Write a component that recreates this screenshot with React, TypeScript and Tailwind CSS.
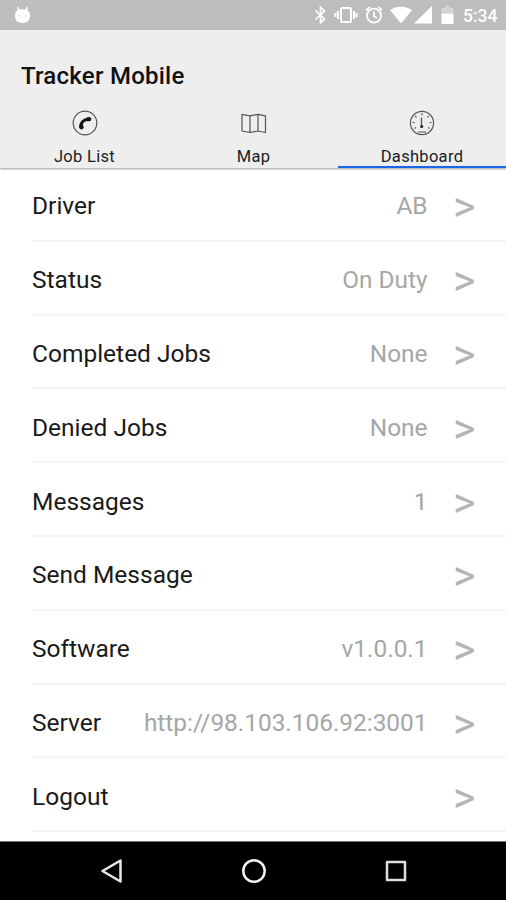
import type { ReactNode } from "react";

type Row = { label: string; value?: string };

const rows: Row[] = [
  { label: "Driver", value: "AB" },
  { label: "Status", value: "On Duty" },
  { label: "Completed Jobs", value: "None" },
  { label: "Denied Jobs", value: "None" },
  { label: "Messages", value: "1" },
  { label: "Send Message" },
  { label: "Software", value: "v1.0.0.1" },
  { label: "Server", value: "http://98.103.106.92:3001" },
  { label: "Logout" },
];

function StatusBar() {
  return (
    <div className="flex h-[30px] shrink-0 items-center bg-[#bdbdbd] pr-[9px] pl-[14px] text-white">
      <svg width="17" height="18" viewBox="0 0 17 18" fill="currentColor">
        <path d="M4 0.5 5.8 3.500h5.400L13 0.500l0.800 0.500-0.500 3.200c1.800 1 2.700 2.800 2.700 5.400 0 5-2.300 7.400-7.500 7.400S1 14.600 1 9.600c0-2.600.9-4.400 2.700-5.400L3.200 1z" />
        <circle cx="5.2" cy="9.7" r="0.7" fill="#bdbdbd" />
        <circle cx="11.8" cy="9.7" r="0.7" fill="#bdbdbd" />
      </svg>
      <div className="ml-auto flex items-center">
        <svg width="13" height="18" viewBox="0 0 13 18" fill="none" stroke="currentColor" strokeWidth="1.7">
          <path d="m1.500 4.500 9 8.500-4 3.800V1.200l4 3.800-9 8.500" />
        </svg>
        <svg className="ml-[7px]" width="24" height="18" viewBox="0 0 24 18" fill="none" stroke="currentColor" strokeWidth="2">
          <rect x="7" y="2" width="10" height="14" rx="1" />
          <path d="M4 5v8M20 5v8M1.500 7v4M22.500 7v4" />
        </svg>
        <svg className="ml-[7px]" width="18" height="18" viewBox="0 0 18 18" fill="none" stroke="currentColor" strokeWidth="1.8">
          <circle cx="9" cy="9.700" r="7" />
          <path d="M9 5.500v4.800l3 1.800M1 4.300l3.800-3.200M17 4.300l-3.800-3.200" />
        </svg>
        <svg className="ml-[7px]" width="22" height="18" viewBox="0 0 22 18" fill="currentColor">
          <path d="M0 4C6.500-0.500 15.500-0.500 22 4L11 17.500z" />
        </svg>
        <svg className="ml-[2px]" width="18" height="18" viewBox="0 0 18 18" fill="currentColor">
          <path d="M18 0v17.500H0z" />
        </svg>
        <svg className="ml-[9px]" width="13" height="18" viewBox="0 0 13 18" fill="currentColor">
          <path d="M4 0h5v2h3.500v5.500H0.500V2H4z" opacity="0.35" />
          <path d="M0.500 7.500h12V17a1 1 0 0 1-1 1h-10a1 1 0 0 1-1-1z" />
        </svg>
        <span className="ml-[9px] w-[34px] pt-[3px] text-[17.500px] leading-none font-medium whitespace-nowrap">5:34</span>
      </div>
    </div>
  );
}

function PhoneIcon() {
  return (
    <svg width="26" height="26" viewBox="0 0 26 26" fill="none">
      <circle cx="13" cy="13" r="11.800" stroke="#555" strokeWidth="1.200" />
      <path d="M8.800 18C8 13 12 8.600 17.400 9.200" stroke="#111" strokeWidth="3" />
      <path d="m7.300 15 3.700-.2.800 3.300-2.500 1.600-1.600-1.500zM14.500 7.600l2.900-.7 1.900 1.200-.3 2.600-3.500.8z" fill="#111" />
    </svg>
  );
}

function MapIcon() {
  return (
    <svg width="26" height="26" viewBox="0 0 26 26" fill="none" stroke="#555" strokeWidth="1.200" strokeLinejoin="round">
      <path d="m1 4.300 8 1.500 8-1.500 7.500 1.500v16.700L17 21 9 22.500 1 21zM9 5.800v16.700M17 4.300V21" />
    </svg>
  );
}

function GaugeIcon() {
  return (
    <svg width="26" height="26" viewBox="0 0 26 26" fill="none" stroke="#555">
      <circle cx="13" cy="13" r="11.600" strokeWidth="1.200" />
      <path
        d="M13 3.200v2M6.200 6l1.300 1.300M19.800 6l-1.300 1.300M3.500 12.500h2M20.500 12.500h2M5.500 18.500l1.400-1M20.500 18.500l-1.400-1M9 22h8"
        strokeWidth="1.200"
      />
      <path d="M12.500 7.500v8" strokeWidth="1.300" />
      <circle cx="12.700" cy="16.500" r="1.600" fill="#222" stroke="none" />
    </svg>
  );
}

function Tab({ icon, label, active }: { icon: ReactNode; label: string; active?: boolean }) {
  return (
    <div
      className={
        active
          ? "flex flex-1 flex-col items-center border-b-2 border-[#1a66ea]"
          : "flex flex-1 flex-col items-center border-b-2 border-transparent"
      }
    >
      {icon}
      <span className="mt-[12px] text-[16.500px] leading-[18px] tracking-[0.3px] text-[#1c1c1c]">{label}</span>
    </div>
  );
}

export default function App() {
  return (
    <div className="flex h-[900px] w-[506px] flex-col overflow-hidden bg-white font-['Roboto',sans-serif]">
      <StatusBar />
      <header className="relative flex h-[138px] shrink-0 flex-col bg-[#eeeeee] shadow-[0_1px_2px_rgba(0,0,0,0.4)]">
        <h1 className="mt-[31px] pl-[21px] text-[24px] leading-[30px] font-medium tracking-[0.25px] text-[#111]">
          Tracker Mobile
        </h1>
        <nav className="mt-[19px] grid flex-1 grid-cols-[169px_169px_168px]">
          <Tab icon={<PhoneIcon />} label="Job List" />
          <Tab icon={<MapIcon />} label="Map" />
          <Tab icon={<GaugeIcon />} label="Dashboard" active />
        </nav>
      </header>

      <main className="min-h-0 flex-1 overflow-hidden pl-8">
        {rows.map((row) => (
          <div
            key={row.label}
            className="flex h-[73.800px] items-center border-b-2 border-[#f5f5f5] pt-[5px] pr-[30.500px] text-[24.500px] leading-[30px]"
          >
            <span className="text-[#1a1a1a]">{row.label}</span>
            <span className="ml-auto text-[24.400px] text-[#a6a6a6]">{row.value}</span>
            <span className="ml-[25.500px] text-[43px] leading-[30px] text-[#b4b4b4]">&gt;</span>
          </div>
        ))}
      </main>

      <footer className="flex h-[59px] shrink-0 items-center border-t border-[#777] bg-black pl-[100px]">
        <svg width="24" height="26" viewBox="0 0 24 26" fill="none" stroke="#e8e8e8" strokeWidth="2.500" strokeLinejoin="round">
          <path d="M20.500 2.500v21L2.500 13z" />
        </svg>
        <svg className="ml-[117px]" width="26" height="26" viewBox="0 0 26 26" fill="none" stroke="#f2f2f2" strokeWidth="2.500">
          <circle cx="13" cy="13" r="10.700" />
        </svg>
        <svg className="ml-[118px]" width="22" height="22" viewBox="0 0 22 22" fill="none" stroke="#dedede" strokeWidth="2.500" strokeLinejoin="round">
          <rect x="2" y="2" width="18" height="18" />
        </svg>
      </footer>
    </div>
  );
}
